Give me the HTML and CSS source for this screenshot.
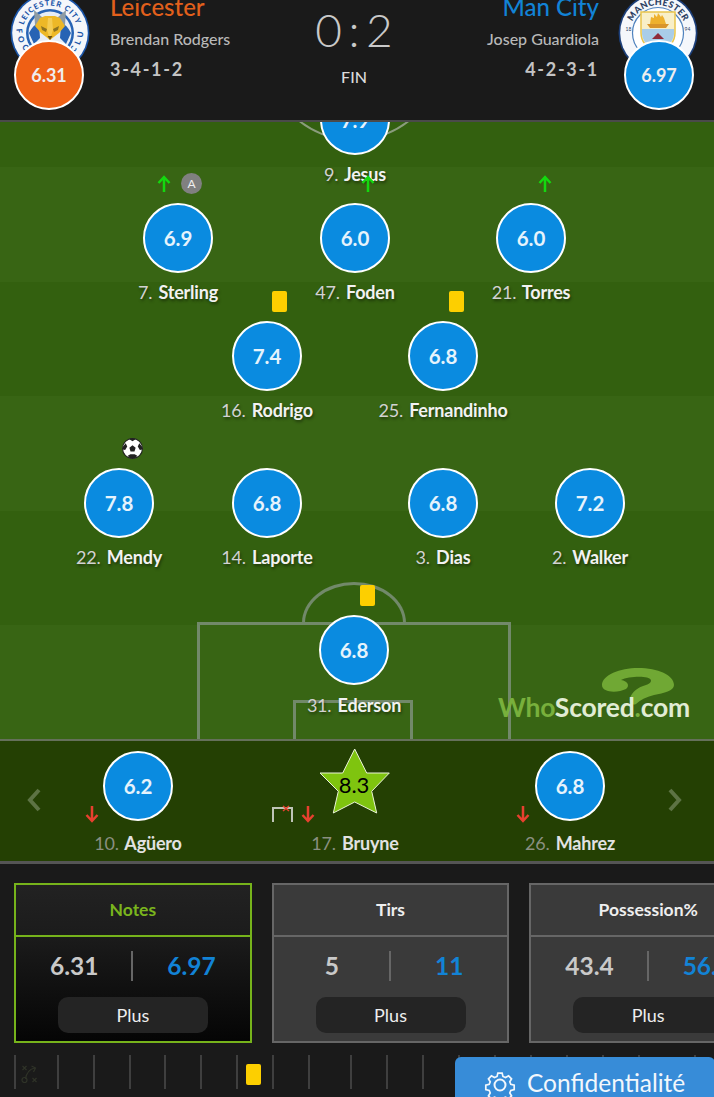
FILE: index.html
```html
<!DOCTYPE html>
<html lang="fr">
<head>
<meta charset="utf-8">
<title>Leicester 0 : 2 Man City</title>
<link rel="stylesheet" href="styles.css">
</head>
<body>
<div class="page">
  <header class="match">
    <div class="crest crest-home">
      <svg viewBox="0 0 80 80" width="80" height="80">
        <defs>
          <path id="arc-home" d="M12.500 40A27.500 27.500 0 0 1 67.500 40"/>
          <path id="arc-home-low" d="M6.500 36A33.500 33.500 0 0 0 73.500 36"/>
          <path id="arc-mc" d="M12 40A28 28 0 0 1 68 40"/>
        </defs>
        <circle cx="40" cy="40" r="39.500" fill="#1b55a8"/>
        <circle cx="40" cy="40" r="37.800" fill="#f4f6fa"/>
        <text class="crest-text lei"><textPath href="#arc-home" startOffset="50%" text-anchor="middle">LEICESTER CITY</textPath></text>
        <text class="crest-text lei low"><textPath href="#arc-home-low">FOOTBALL CLUB</textPath></text>
        <circle cx="40" cy="40" r="24" fill="#2763b4"/>
        <circle cx="40" cy="40" r="21.500" fill="#e6edf6"/>
        <path d="M19 40q5-10 10-9l1 14-6 6zM61 40q-5-10-10-9l-1 14 6 6z" fill="#2763b4"/>
        <path d="M24 17l9 8-4 9-4-2zM56 17l-9 8 4 9 4-2z" fill="#8f9ca3"/>
        <path d="M30 25l5-2h10l5 2 5 8-6 7-9 7-9-7-6-7z" fill="#edb827"/>
        <path d="M31 33l6 3-1 3-4-2zM49 33l-6 3 1 3 4-2z" fill="#8d7320"/>
        <path d="M38 25h4l1 12-3 9-3-9z" fill="#f5cc52"/>
        <path d="M37.500 43h5l-2.500 4z" fill="#6d5112"/>
      </svg>
    </div>
    <div class="badge badge-home">6.31</div>
    <div class="team team-home">
      <div class="team-name home">Leicester</div>
      <div class="manager">Brendan Rodgers</div>
      <div class="formation">3-4-1-2</div>
    </div>
    <div class="score-box">
      <div class="score">0 : 2</div>
      <div class="status">FIN</div>
    </div>
    <div class="team team-away">
      <div class="team-name away">Man City</div>
      <div class="manager">Josep Guardiola</div>
      <div class="formation">4-2-3-1</div>
    </div>
    <div class="crest crest-away">
      <svg viewBox="0 0 80 80" width="80" height="80">
        <circle cx="40" cy="40" r="39.500" fill="#1c3f7a"/>
        <circle cx="40" cy="40" r="37.800" fill="#f5f7fb"/>
        <text class="crest-text mc"><textPath href="#arc-mc" startOffset="50%" text-anchor="middle">MANCHESTER</textPath></text>
        <circle cx="40" cy="40" r="25.500" fill="#fff" stroke="#4f82bd" stroke-width="1.200"/>
        <text class="crest-year" x="7.500" y="38">18</text>
        <text class="crest-year" x="66.500" y="38">94</text>
        <path d="M23 19h34v21q0 13-17 20q-17-7-17-20z" fill="#f8efc8" stroke="#e9c54c" stroke-width="1.500"/>
        <path d="M24 36h32v5q-1 11-16 18q-15-7-16-18z" fill="#a9cde8"/>
        <path d="M32 31l1-7 3 1 0-4 3 3 1-4 3 4 1-2 2 3 2 6z" fill="#eeb12e"/>
        <path d="M29 31h22l-3 4H32z" fill="#d9952a"/>
        <path d="M34 46l6-6 6 6z" fill="#8f2b3a"/>
      </svg>
    </div>
    <div class="badge badge-away">6.97</div>
  </header>

  <section class="pitch">
    <div class="stripes">
      <div class="stripe stripe-first"></div><div class="stripe light"></div><div class="stripe"></div><div class="stripe light"></div><div class="stripe"></div><div class="stripe light"></div>
    </div>
    <div class="line top-arc"></div>
    <div class="line penalty-arc"></div>
    <div class="line penalty-box"></div>
    <div class="line goal-box"></div>

    <div class="player p-jesus"><div class="rating">7.9</div><div class="name"><span class="num">9.</span> Jesus</div></div>
    <div class="player p-sterling"><div class="rating">6.9</div><div class="name"><span class="num">7.</span> Sterling</div></div>
    <div class="player p-foden"><div class="rating">6.0</div><div class="name"><span class="num">47.</span> Foden</div></div>
    <div class="player p-torres"><div class="rating">6.0</div><div class="name"><span class="num">21.</span> Torres</div></div>
    <div class="player p-rodrigo"><div class="rating">7.4</div><div class="name"><span class="num">16.</span> Rodrigo</div></div>
    <div class="player p-fernandinho"><div class="rating">6.8</div><div class="name"><span class="num">25.</span> Fernandinho</div></div>
    <div class="player p-mendy"><div class="rating">7.8</div><div class="name"><span class="num">22.</span> Mendy</div></div>
    <div class="player p-laporte"><div class="rating">6.8</div><div class="name"><span class="num">14.</span> Laporte</div></div>
    <div class="player p-dias"><div class="rating">6.8</div><div class="name"><span class="num">3.</span> Dias</div></div>
    <div class="player p-walker"><div class="rating">7.2</div><div class="name"><span class="num">2.</span> Walker</div></div>
    <div class="player p-ederson"><div class="rating">6.8</div><div class="name"><span class="num">31.</span> Ederson</div></div>

    <svg class="arrow up a1" viewBox="0 0 14 18"><path d="M7 17V2M1.500 8L7 2l5.500 6" /></svg>
    <svg class="arrow up a2" viewBox="0 0 14 18"><path d="M7 17V2M1.500 8L7 2l5.500 6" /></svg>
    <svg class="arrow up a3" viewBox="0 0 14 18"><path d="M7 17V2M1.500 8L7 2l5.500 6" /></svg>
    <div class="captain">A</div>
    <div class="card c1"></div>
    <div class="card c2"></div>
    <div class="card c3"></div>
    <svg class="ball" viewBox="0 0 20 20">
      <circle cx="10" cy="10" r="9.500" fill="#fff" stroke="#222" stroke-width="1"/>
      <path d="M10 7l3 2.200-1.100 3.600H8.100L7 9.200z" fill="#222"/>
      <path d="M7 1.200L10 3l3-1.800-1-1H8zM1 8l2.500-3 1.500 3-2 3.500L.6 11zM19 8l-2.500-3-1.500 3 2 3.500 2.400-.5zM5.500 17l2.500-1.500 4 0 2.500 1.500-2 2.500h-5z" fill="#222"/>
    </svg>

    <div class="logo"><svg class="logo-mark" viewBox="0 0 72 38"><path d="M0 17C0 7 18 0 36 0C56 0 72 7 72 17C72 23 62 25 52 27C44 29 38 32 34 36C30 38 27 34 28 30C30 24 36 19 44 17C50 15 51 11 45 9.500C38 8 25 9 19 12C26 13 28 18 24 21C16 25 0 25 0 17Z" fill="#70a834"/></svg><span class="logo-text"><span class="logo-who">Who</span>Scored<span class="logo-dot">.</span>com</span></div>
  </section>

  <section class="subs">
    <svg class="chev chev-l" viewBox="0 0 16 26"><path d="M13 3L4 13l9 10"/></svg>
    <div class="sub">
      <div class="sub-top">
        <svg class="arrow down" viewBox="0 0 14 18"><path d="M7 1v15M1.500 10L7 16l5.500-6"/></svg>
        <div class="rating">6.2</div>
      </div>
      <div class="name"><span class="num">10.</span> Agüero</div>
    </div>
    <div class="sub sub-mid">
      <div class="sub-top">
        <svg class="goal-miss" viewBox="0 0 22 18"><path class="post" d="M1 17V3h19v14"/><path class="x" d="M11 1l6 5M17 1l-6 5"/></svg>
        <svg class="arrow down" viewBox="0 0 14 18"><path d="M7 1v15M1.500 10L7 16l5.500-6"/></svg>
        <div class="star-wrap">
          <svg viewBox="-1 -1 72 67" width="72" height="67"><path d="M34.700 0L46.700 24H69.300L51.700 42.300L56.700 64L34.700 53L13.300 64L18.300 42.300L0 24H22.700Z" fill="#7fc40f" stroke="#eaf3d8" stroke-width="1"/></svg>
          <span class="star-val">8.3</span>
        </div>
      </div>
      <div class="name"><span class="num">17.</span> Bruyne</div>
    </div>
    <div class="sub">
      <div class="sub-top">
        <svg class="arrow down" viewBox="0 0 14 18"><path d="M7 1v15M1.500 10L7 16l5.500-6"/></svg>
        <div class="rating">6.8</div>
      </div>
      <div class="name"><span class="num">26.</span> Mahrez</div>
    </div>
    <svg class="chev chev-r" viewBox="0 0 16 26"><path d="M3 3l9 10-9 10"/></svg>
  </section>

  <section class="stats">
    <div class="cards">
      <article class="stat stat-active">
        <h3 class="stat-title">Notes</h3>
        <div class="stat-body">
          <div class="values"><span class="v-home">6.31</span><span class="v-away">6.97</span></div>
          <div class="more">Plus</div>
        </div>
      </article>
      <article class="stat">
        <h3 class="stat-title">Tirs</h3>
        <div class="stat-body">
          <div class="values"><span class="v-home">5</span><span class="v-away">11</span></div>
          <div class="more">Plus</div>
        </div>
      </article>
      <article class="stat">
        <h3 class="stat-title">Possession%</h3>
        <div class="stat-body">
          <div class="values"><span class="v-home">43.4</span><span class="v-away">56.6</span></div>
          <div class="more">Plus</div>
        </div>
      </article>
    </div>
    <div class="timeline">
      <i class="tick t0"></i><i class="tick t1"></i><i class="tick t2"></i><i class="tick t3"></i><i class="tick t4"></i><i class="tick t5"></i><i class="tick t6"></i><i class="tick t7"></i><i class="tick t8"></i><i class="tick t9"></i><i class="tick t10"></i><i class="tick t11"></i><i class="tick t12"></i><i class="tick t13"></i><i class="tick t14"></i><i class="tick t15"></i><i class="tick t16"></i><i class="tick t17"></i><i class="tick t18"></i>
      <svg class="tactic" viewBox="0 0 16 20"><path d="M4 15C5 8 9 5 13 4M10 2l4 2-2 4M1 2l4 4M5 2L1 6M11 14l4 4M15 14l-4 4"/><circle cx="3" cy="16" r="2.500"/></svg>
      <div class="card tl-card"></div>
    </div>
    <div class="privacy">
      <svg class="gear" viewBox="0 0 32 32"><path d="M13.500 2h5l1 4 3 1.300 3.600-2.100 3.500 3.500-2.100 3.600 1.200 3 4 1v5l-4 1-1.200 3 2.100 3.600-3.500 3.500-3.600-2.100-3 1.200-1 4h-5l-1-4-3-1.200-3.600 2.100-3.500-3.500 2.100-3.600-1.200-3-4-1v-5l4-1 1.200-3-2.100-3.600 3.500-3.500 3.600 2.100 3-1.300z" transform="translate(2.400 2.400) scale(.85)"/><circle cx="16" cy="16" r="5.500"/></svg>
      <span>Confidentialité</span>
    </div>
  </section>
</div>
</body>
</html>
```

FILE: styles.css
```css
* { box-sizing: border-box; }
html, body { margin: 0; padding: 0; background: #1a1a1a; }
body { font-family: Lato, "Liberation Sans", sans-serif; }
.page { position: relative; width: 714px; height: 1097px; overflow: hidden; }

/* header */
.match { position: relative; height: 122px; background: #1a1a1a; border-bottom: 2px solid #4a4a4a; }
.crest { position: absolute; top: -7px; }
.crest-home { left: 10px; }
.crest-away { left: 618px; }
.crest-text { font-family: Lato, "Liberation Sans", sans-serif; font-weight: 900; }
.crest-text.lei { fill: #1b55a8; font-size: 7.500px; letter-spacing: 1px; }
.crest-text.low { font-size: 8px; letter-spacing: 4px; }
.crest-text.mc { fill: #2c3f63; font-size: 9px; letter-spacing: .3px; }
.crest-year { font-family: Lato, "Liberation Sans", sans-serif; font-size: 5px; fill: #2c3f63; }
.badge { position: absolute; top: 40px; width: 70px; height: 70px; border-radius: 50%; border: 2px solid #fff; color: #eee; font-size: 18px; font-weight: 700; display: flex; align-items: center; justify-content: center; }
.badge-home { left: 14px; background: #ef5f14; }
.badge-away { left: 624px; background: #0a8be0; }
.team { position: absolute; top: -8px; }
.team-home { left: 110px; }
.team-away { right: 115px; text-align: right; }
.team-name { font-size: 24px; font-weight: 500; line-height: 30px; }
.home { color: #e2601c; }
.away { color: #1283d6; }
.manager { color: #b8b8b8; font-size: 16px; font-weight: 500; line-height: 20px; margin-top: 7px; }
.formation { color: #c4c4c4; font-size: 18px; font-weight: 700; line-height: 20px; margin-top: 10px; letter-spacing: 1.700px; }
.score-box { position: absolute; left: 254px; top: 5px; width: 200px; text-align: center; }
.score { color: #c9c9c9; font-size: 46px; font-weight: 300; line-height: 50px; word-spacing: -6px; }
.status { color: #dcdcdc; font-size: 16px; line-height: 20px; margin-top: 12px; font-weight: 500; }

/* pitch */
.pitch { position: relative; height: 617px; background: #33600f; overflow: hidden; }
.stripes { display: flex; flex-direction: column; height: 100%; }
.stripe { height: 114.500px; flex: none; background: #33600f; }
.stripe-first { height: 45px; }
.stripe.light { background: #386514; }
.line { position: absolute; border: 3px solid #72896a; }
.top-arc { left: 265px; top: -159px; width: 178px; height: 178px; border-radius: 50%; border-width: 2px; border-color: #8a9c7c; }
.penalty-arc { left: 302px; top: 460px; width: 104px; height: 41px; border-radius: 52px 52px 0 0 / 41px 41px 0 0; border-bottom: 0; }
.penalty-box { left: 197px; top: 500px; width: 314px; height: 130px; }
.goal-box { left: 293px; top: 578px; width: 120px; height: 60px; }

.player { position: absolute; width: 180px; margin-left: -90px; display: flex; flex-direction: column; align-items: center; }
.rating { width: 70px; height: 70px; border-radius: 50%; border: 2px solid #fff; background: #0a8be0; color: #e6f3fc; font-size: 20.500px; font-weight: 700; display: flex; align-items: center; justify-content: center; flex: none; }
.name { color: #f2f2f2; font-size: 18px; font-weight: 700; line-height: 22px; margin-top: 8px; white-space: nowrap; text-shadow: 1px 2px 3px rgba(0,0,0,.45); letter-spacing: -.2px; }
.num { color: #d2d2d2; font-weight: 400; margin-right: 2px; }

.p-jesus { left: 355px; top: -37px; }
.p-sterling { left: 178px; top: 81px; }
.p-foden { left: 355px; top: 81px; }
.p-torres { left: 531px; top: 81px; }
.p-rodrigo { left: 267px; top: 199px; }
.p-fernandinho { left: 443px; top: 199px; }
.p-mendy { left: 119px; top: 346px; }
.p-laporte { left: 267px; top: 346px; }
.p-dias { left: 443px; top: 346px; }
.p-walker { left: 590px; top: 346px; }
.p-ederson { left: 354px; top: 493px; }
.p-ederson .name { margin-top: 9px; }

.arrow { width: 14px; height: 18px; position: absolute; fill: none; stroke-width: 2.500px; }
.arrow.up { stroke: #14d80f; }
.arrow.down { stroke: #e8402f; }
.a1 { left: 157px; top: 53px; }
.a2 { left: 361px; top: 53px; }
.a3 { left: 538px; top: 53px; }
.captain { position: absolute; left: 181px; top: 51px; width: 21px; height: 21px; border-radius: 50%; background: #808080; color: #eee; font-size: 12px; display: flex; align-items: center; justify-content: center; }
.card { position: absolute; width: 15px; height: 21px; border-radius: 2px; background: #fdcf00; }
.c1 { left: 272px; top: 169px; }
.c2 { left: 449px; top: 169px; }
.c3 { left: 360px; top: 463px; }
.ball { position: absolute; left: 122px; top: 316px; width: 21px; height: 21px; }

.logo { position: absolute; left: 498px; top: 546px; width: 200px; height: 54px; }
.logo-mark { position: absolute; left: 104px; top: 0; width: 72px; height: 38px; }
.logo-text { position: absolute; left: 0; bottom: 0; font-size: 26.500px; font-weight: 700; color: #e1ecd4; letter-spacing: -.2px; line-height: 30px; white-space: nowrap; }
.logo-who, .logo-dot { color: #78b03c; }

/* subs */
.subs { position: relative; height: 125px; background: #244003; border-top: 2px solid #65705a; border-bottom: 3px solid #555; }
.chev { position: absolute; top: 46px; width: 16px; height: 26px; fill: none; stroke: #5d7344; stroke-width: 4px; }
.chev-l { left: 26px; }
.chev-r { left: 667px; }
.sub { position: absolute; top: 10px; width: 180px; display: flex; flex-direction: column; align-items: center; }
.sub:nth-of-type(1) { left: 48px; }
.sub-mid { left: 265px; }
.sub:nth-of-type(3) { left: 480px; }
.sub-top { position: relative; height: 70px; width: 100%; display: flex; justify-content: center; }
.sub .arrow { left: 37px; top: 54px; }
.sub:nth-of-type(3) .arrow { left: 36px; }
.sub .name { color: #e2e2e2; margin-top: 11px; text-shadow: none; }
.sub .num { color: #8a8f80; }
.sub-mid .arrow { left: 36px; top: 54px; }
.goal-miss { position: absolute; left: 7px; top: 54px; width: 22px; height: 18px; fill: none; }
.goal-miss .post { stroke: #bfc4b8; stroke-width: 2px; }
.goal-miss .x { stroke: #e8402f; stroke-width: 1.500px; }
.star-wrap { position: relative; width: 72px; height: 67px; margin-top: -3px; }
.star-val { position: absolute; left: 0; right: 2px; top: 25px; text-align: center; color: #000; font-size: 22px; font-weight: 400; line-height: 24px; }

/* stats */
.stats { position: relative; height: 233px; background: #1a1a1a; padding: 19px 0 0 14px; }
.cards { display: flex; gap: 20px; width: 760px; }
.stat { width: 237.700px; height: 160px; flex: none; background: #3a3a3a; border: 2px solid #666; display: flex; flex-direction: column; }
.stat-title { margin: 0; height: 52px; padding-bottom: 2px; border-bottom: 2px solid #666; display: flex; align-items: center; justify-content: center; color: #eee; font-size: 17.500px; font-weight: 700; flex: none; }
.stat-body { flex: 1; display: flex; flex-direction: column; align-items: center; }
.values { display: grid; grid-template-columns: 1fr 1fr; width: 100%; margin-top: 14px; height: 30px; padding-left: 1px; font-size: 24.500px; font-weight: 700; line-height: 30px; position: relative; }
.values span { text-align: center; }
.v-home { color: #c9c9c9; border-right: 2px solid #666; }
.v-away { color: #1283d6; }
.more { width: 150px; height: 36px; margin-top: 16px; border-radius: 10px; background: #242424; color: #eee; font-size: 18px; display: flex; align-items: center; justify-content: center; }
.stat-active { border-color: #76b31b; background: linear-gradient(#222 0, #1c1c1c 30%, #050505 100%); }
.stat-active .stat-title { color: #7ab51d; border-bottom-color: #76b31b; }

.timeline { position: absolute; left: 0; top: 183px; width: 714px; height: 50px; }
.tick { position: absolute; top: 8px; width: 2px; height: 34px; background: #3f3f3f; }
.t0 { left: 14px; } .t1 { left: 57px; } .t2 { left: 93px; } .t3 { left: 129px; } .t4 { left: 164px; } .t5 { left: 200px; } .t6 { left: 236px; } .t7 { left: 272px; } .t8 { left: 308px; } .t9 { left: 350px; } .t10 { left: 386px; } .t11 { left: 422px; }
.t12 { left: 458px; } .t13 { left: 494px; } .t14 { left: 530px; } .t15 { left: 566px; } .t16 { left: 602px; } .t17 { left: 638px; } .t18 { left: 694px; }
.tactic { position: absolute; left: 21px; top: 17px; width: 17px; height: 20px; fill: none; stroke: #2f3328; stroke-width: 1.200px; }
.tl-card { left: 245.500px; top: 17px; }

.privacy { position: absolute; left: 455px; top: 193px; width: 260px; height: 50px; background: #378cd8; border-radius: 6px 6px 0 0; color: #f2f7fc; font-size: 24.500px; display: flex; align-items: flex-start; padding: 12px 0 0 29px; gap: 11px; }
.privacy span { line-height: 28px; }
.gear { width: 32px; height: 32px; fill: none; stroke: #f2f7fc; stroke-width: 2px; flex: none; }
```
